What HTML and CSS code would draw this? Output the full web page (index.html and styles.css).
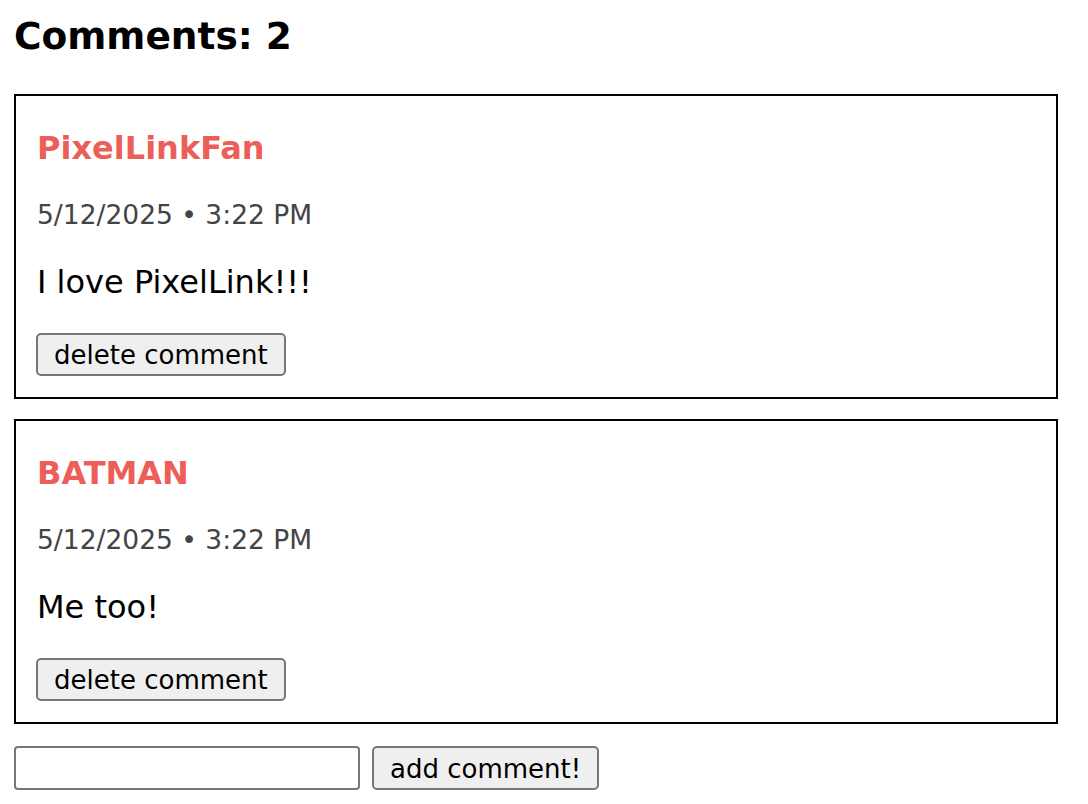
FILE: index.html
```html
<!DOCTYPE html>
<html>
<head>
<meta charset="utf-8">
<title>Comments</title>
<link rel="stylesheet" href="styles.css">
</head>
<body>
<main class="page">
  <h2 class="title">Comments: 2</h2>
  <section class="comment-list">
    <article class="comment">
      <h3 class="author">PixelLinkFan</h3>
      <p class="date">5/12/2025 • 3:22 PM</p>
      <p class="text">I love PixelLink!!!</p>
      <div><button class="btn">delete comment</button></div>
    </article>
    <article class="comment">
      <h3 class="author">BATMAN</h3>
      <p class="date">5/12/2025 • 3:22 PM</p>
      <p class="text">Me too!</p>
      <div><button class="btn">delete comment</button></div>
    </article>
  </section>
  <form class="add-form">
    <input class="field" type="text">
    <button class="btn btn-add" type="button">add comment!</button>
  </form>
</main>
</body>
</html>
```
FILE: styles.css
```css
html, body {
  margin: 0;
  padding: 0;
  background: #fff;
}
body {
  font-family: "DejaVu Sans", Verdana, sans-serif;
  color: #000;
  padding: 14px;
}
.page {
  width: 1044px;
}
.title {
  margin: 0 0 36px 0;
  font-size: 37.5px;
  line-height: 44px;
  font-weight: bold;
}
.comment-list {
  display: flex;
  flex-direction: column;
  gap: 20px;
}
.comment {
  border: 2px solid #000;
  padding: 33px 20px 21px 21px;
  display: flex;
  flex-direction: column;
  gap: 32px;
}
.author {
  margin: 0;
  font-size: 32px;
  line-height: 38px;
  font-weight: bold;
  color: #ec5f58;
}
.date {
  margin: 0;
  font-size: 26.5px;
  line-height: 32px;
  color: #444;
}
.text {
  margin: 0;
  font-size: 32px;
  line-height: 38px;
}
.btn {
  font-family: "DejaVu Sans", Verdana, sans-serif;
  font-size: 26px;
  line-height: 31px;
  padding: 5px 16px 3px;
  margin: 0 0 0 -1px;
  border: 2px solid #767676;
  border-radius: 5px;
  background: #efefef;
  color: #000;
  box-sizing: border-box;
  height: 43px;
}
.add-form {
  display: flex;
  gap: 12px;
  margin-top: 22px;
}
.field {
  width: 346px;
  height: 44px;
  box-sizing: border-box;
  border: 2px solid #767676;
  border-radius: 4px;
  margin: 0;
  padding: 0 6px;
  font-size: 26px;
  font-family: "DejaVu Sans", Verdana, sans-serif;
}
.btn-add {
  margin: 0;
  height: 44px;
  padding: 5px 16px 3px;
}
```
